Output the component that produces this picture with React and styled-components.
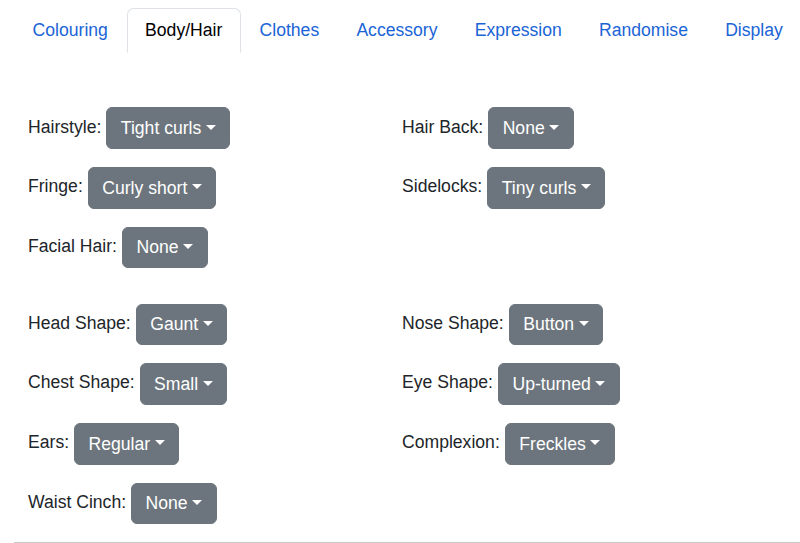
import React from "react";
import styled, { createGlobalStyle } from "styled-components";

const GlobalStyle = createGlobalStyle`
  body {
    margin: 0;
    background: #fff;
    font-family: "Liberation Sans", Arial, Helvetica, sans-serif;
    font-size: 17.6px;
    line-height: 1.5;
    color: #212529;
    overflow: hidden;
  }
`;

const tabs = [
  "Colouring",
  "Body/Hair",
  "Clothes",
  "Accessory",
  "Expression",
  "Randomise",
  "Display",
];

const groups = [
  [
    ["Hairstyle", "Tight curls"],
    ["Hair Back", "None"],
    ["Fringe", "Curly short"],
    ["Sidelocks", "Tiny curls"],
    ["Facial Hair", "None"],
  ],
  [
    ["Head Shape", "Gaunt"],
    ["Nose Shape", "Button"],
    ["Chest Shape", "Small"],
    ["Eye Shape", "Up-turned"],
    ["Ears", "Regular"],
    ["Complexion", "Freckles"],
    ["Waist Cinch", "None"],
  ],
];

export default function App() {
  return (
    <Page>
      <GlobalStyle />
      <Tabs>
        {tabs.map((t) => (
          <Tab key={t} $active={t === "Body/Hair"}>
            {t}
          </Tab>
        ))}
      </Tabs>
      <Content>
        {groups.map((group, gi) => (
          <Group key={gi}>
            {group.map(([label, value]) => (
              <Field key={label}>
                <Label>{label}:</Label>
                <Dropdown type="button">{value}</Dropdown>
              </Field>
            ))}
          </Group>
        ))}
      </Content>
      <Rule />
    </Page>
  );
}

const Page = styled.div`
  padding: 7.5px 0 0 14px;
  width: 820px;
`;

const Tabs = styled.ul`
  display: flex;
  list-style: none;
  margin: 0;
  padding: 0;
  border-bottom: 1px solid #dee2e6;
`;

const Tab = styled.li`
  margin-bottom: -1px;
  padding: 8.8px 17.6px;
  border: 1px solid ${(p) => (p.$active ? "#dee2e6" : "transparent")};
  border-bottom-color: ${(p) => (p.$active ? "#fff" : "transparent")};
  border-radius: 6.6px 6.6px 0 0;
  background: #fff;
  color: ${(p) => (p.$active ? "#000" : "#1a64d6")};
  cursor: pointer;
`;

const Content = styled.div`
  padding: 54px 0 0 14px;
`;

const Group = styled.div`
  display: grid;
  grid-template-columns: 374px 1fr;
  row-gap: 18px;
  & + & {
    margin-top: 35.6px;
  }
`;

const Field = styled.div`
  display: flex;
  align-items: center;
  gap: 4.9px;
`;

const Label = styled.label`
  padding-bottom: 3px;
`;

const Dropdown = styled.button`
  font: inherit;
  line-height: 1.5;
  color: #fff;
  background: #6c757d;
  border: 1px solid #6c757d;
  border-radius: 6px;
  padding: 6.6px 13.6px;
  cursor: pointer;
  &::after {
    content: "";
    display: inline-block;
    margin-left: 0.255em;
    vertical-align: 0.255em;
    border-top: 0.3em solid;
    border-right: 0.3em solid transparent;
    border-left: 0.3em solid transparent;
    border-bottom: 0;
  }
`;

const Rule = styled.hr`
  margin: 18px 0 0;
  border: 0;
  border-top: 1px solid #c8c9ca;
`;
